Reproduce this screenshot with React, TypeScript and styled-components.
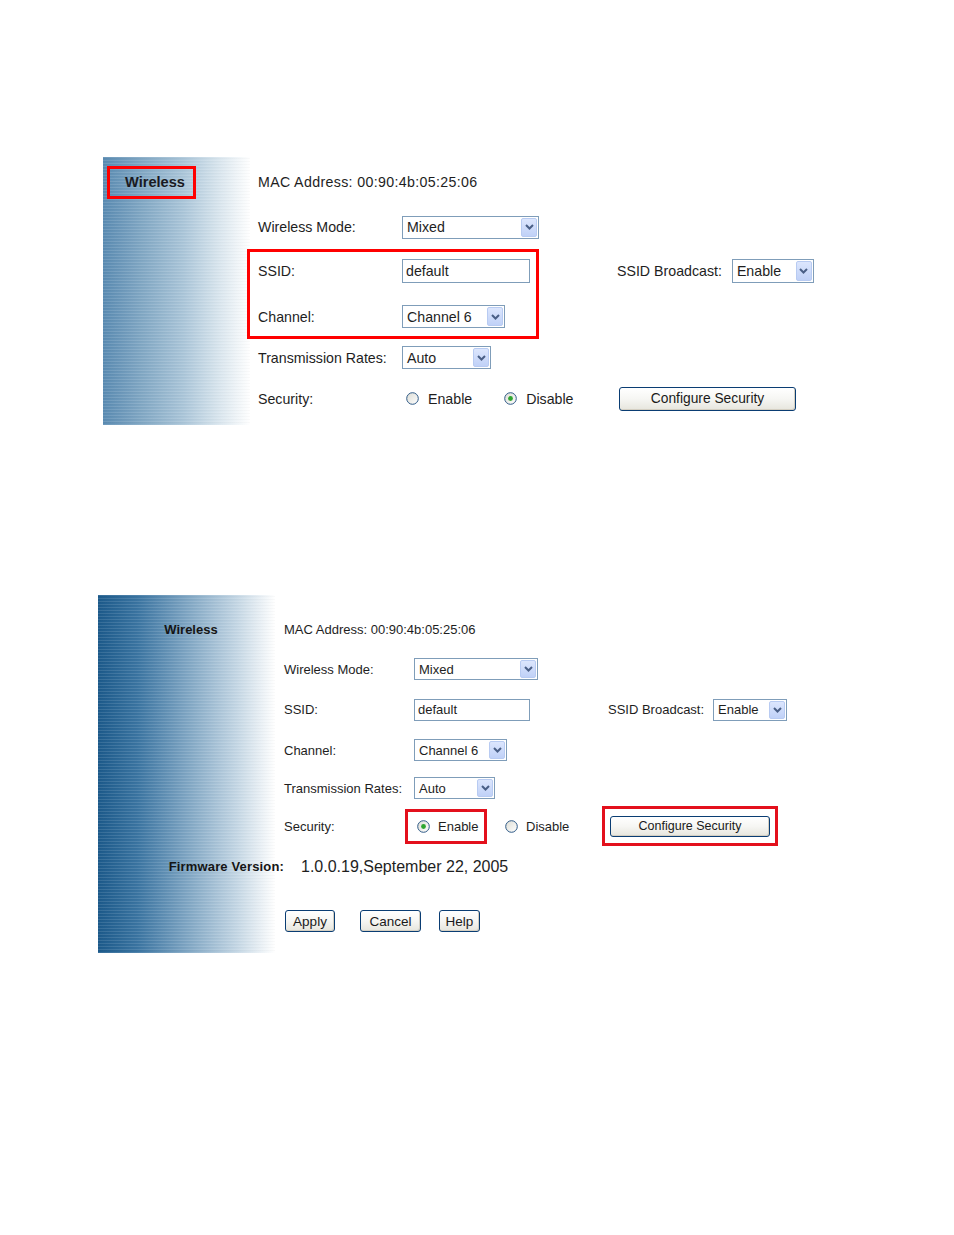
import React from "react";
import styled, { createGlobalStyle } from "styled-components";

const Global = createGlobalStyle`
  html, body { margin: 0; padding: 0; background: #fff; }
  body { font-family: "Liberation Sans", Arial, sans-serif; color: #1e1e1e; }
`;

const Page = styled.div`
  width: 954px;
  min-height: 1235px;
  padding-top: 157px;
  box-sizing: border-box;
`;

const Panel = styled.section<{ $left: number; $top: number; $grad: string; $gw: number; $pt: number; $pb: number }>`
  margin-left: ${(p) => p.$left}px;
  margin-top: ${(p) => p.$top}px;
  width: 740px;
  padding-top: ${(p) => p.$pt}px;
  padding-bottom: ${(p) => p.$pb}px;
  font-size: ${(p) => (p.$grad === "light" ? 14.2 : 13)}px;
  background-image:
    repeating-linear-gradient(to bottom, rgba(255, 255, 255, 0.11) 0 1px, rgba(0, 0, 0, 0.02) 1px 2px, transparent 2px 3px),
    ${(p) =>
      p.$grad === "light"
        ? "linear-gradient(to right, #5a8bb2 0%, #7fa6c3 25%, #abc6d9 55%, #dbe7ef 80%, #ffffff 100%)"
        : "linear-gradient(to right, #1c5a8b 0%, #3a74a1 22%, #7ea5c3 50%, #c3d6e4 78%, #ffffff 100%)"};
  background-size: ${(p) => p.$gw}px 100%, ${(p) => p.$gw}px 100%;
  background-repeat: no-repeat;
`;

const Row = styled.div<{ $cols: string; $h: number }>`
  display: grid;
  grid-template-columns: ${(p) => p.$cols};
  height: ${(p) => p.$h}px;
  align-items: center;
`;

const Group = styled.div`
  position: relative;
`;

const Highlight = styled.div<{ $l: number; $t: number; $w: number; $h: number }>`
  position: absolute;
  left: ${(p) => p.$l}px;
  top: ${(p) => p.$t}px;
  width: ${(p) => p.$w}px;
  height: ${(p) => p.$h}px;
  border: 3px solid #ff0000;
  box-sizing: border-box;
  pointer-events: none;
`;

const SideCell = styled.div<{ $align?: string }>`
  font-weight: bold;
  text-align: ${(p) => p.$align || "left"};
  color: #151515;
`;

const BoxedTitle = styled.div`
  margin-left: 4px;
  width: 89px;
  height: 33px;
  box-sizing: border-box;
  border: 3px solid #ff0000;
  display: flex;
  align-items: center;
  padding-left: 15px;
  font-size: 14.6px;
  font-weight: bold;
  color: #1a1a22;
`;

const Span = styled.div<{ $from: number; $to: number; $pl?: number; $fs?: number }>`
  grid-column: ${(p) => p.$from} / ${(p) => p.$to};
  padding-left: ${(p) => p.$pl || 0}px;
  ${(p) => (p.$fs ? `font-size: ${p.$fs}px;` : "")}
  display: flex;
  align-items: center;
`;

const Label = styled.div`
  white-space: nowrap;
`;

const Mac = styled.div<{ $ls: number }>`
  letter-spacing: ${(p) => p.$ls}px;
  white-space: nowrap;
`;

const SelectBox = styled.div<{ $w: number; $h: number }>`
  width: ${(p) => p.$w}px;
  height: ${(p) => p.$h}px;
  box-sizing: border-box;
  border: 1px solid #7f9db9;
  background: #fff;
  display: flex;
  align-items: stretch;
`;

const SelectValue = styled.div`
  flex: 1;
  display: flex;
  align-items: center;
  padding-left: 4px;
  white-space: nowrap;
  overflow: hidden;
`;

const ArrowBox = styled.div`
  width: 16px;
  margin: 1px;
  box-sizing: border-box;
  border: 1px solid #b8cbf2;
  border-radius: 2px;
  background: linear-gradient(to bottom, #dce6fd, #c0d1f7);
  display: flex;
  align-items: center;
  justify-content: center;
`;

const TextInput = styled.div<{ $w: number; $h: number }>`
  width: ${(p) => p.$w}px;
  height: ${(p) => p.$h}px;
  box-sizing: border-box;
  border: 1px solid #7f9db9;
  background: #fff;
  display: flex;
  align-items: center;
  padding-left: 3px;
`;

const RadioGroup = styled.div<{ $pl: number }>`
  display: flex;
  align-items: center;
  padding-left: ${(p) => p.$pl}px;
`;

const RadioItem = styled.div<{ $gap: number; $mr: number; $ml?: number }>`
  display: flex;
  align-items: center;
  gap: ${(p) => p.$gap}px;
  margin-right: ${(p) => p.$mr}px;
  margin-left: ${(p) => p.$ml || 0}px;
  white-space: nowrap;
`;

const RedFrame = styled.div<{ $w: number; $h: number; $ml: number; $pl: number }>`
  width: ${(p) => p.$w}px;
  height: ${(p) => p.$h}px;
  margin-left: ${(p) => p.$ml}px;
  box-sizing: border-box;
  border: 3px solid #e3101c;
  display: flex;
  align-items: center;
  padding-left: ${(p) => p.$pl}px;
`;

const XPButton = styled.button<{ $w: number; $h: number; $fs: number }>`
  width: ${(p) => p.$w}px;
  height: ${(p) => p.$h}px;
  box-sizing: border-box;
  padding: 0;
  font-family: "Liberation Sans", Arial, sans-serif;
  font-size: ${(p) => p.$fs}px;
  color: #1a1a1a;
  border: 1px solid #0a3d73;
  border-radius: 3px;
  background: linear-gradient(to bottom, #ffffff 0%, #f6f6f3 50%, #e6e5dd 100%);
  box-shadow: inset -1px -1px 0 #d4cfc2;
  display: flex;
  align-items: center;
  justify-content: center;
`;

const ButtonBar = styled.div`
  display: flex;
  align-items: center;
  padding-left: 1px;
`;

const ButtonSlot = styled.div<{ $mr: number }>`
  margin-right: ${(p) => p.$mr}px;
`;

const FirmwareLabel = styled.div`
  font-weight: bold;
  text-align: right;
  letter-spacing: 0.15px;
  color: #151515;
  white-space: nowrap;
`;

const Spacer = styled.span<{ $w: number }>`
  width: ${(p) => p.$w}px;
  flex: none;
`;

const Chevron = () => (
  <svg width="9" height="6" viewBox="0 0 9 6">
    <path d="M1 1 L4.5 4.5 L8 1" fill="none" stroke="#4a5f86" strokeWidth="2" />
  </svg>
);

const Select = ({ w, h, value }: { w: number; h: number; value: string }) => (
  <SelectBox $w={w} $h={h}>
    <SelectValue>{value}</SelectValue>
    <ArrowBox>
      <Chevron />
    </ArrowBox>
  </SelectBox>
);

const Radio = ({ checked }: { checked?: boolean }) => (
  <svg width="13" height="13" viewBox="0 0 13 13">
    <defs>
      <linearGradient id="rg" x1="0" y1="0" x2="1" y2="1">
        <stop offset="0" stopColor="#dcdcd4" />
        <stop offset="1" stopColor="#ffffff" />
      </linearGradient>
    </defs>
    <circle cx="6.5" cy="6.5" r="5.8" fill="url(#rg)" stroke="#2f5a87" strokeWidth="1" />
    {checked && <circle cx="6.5" cy="6.5" r="2.4" fill="#2fa62f" />}
  </svg>
);

const TOP = "155px 144px 215px auto";
const BOT = "186px 130px 194px auto";

export default function App() {
  return (
    <Page>
      <Global />
      <Panel $left={103} $top={0} $grad="light" $gw={147} $pt={0} $pb={5}>
        <Row $cols={TOP} $h={50}>
          <SideCell>
            <BoxedTitle>Wireless</BoxedTitle>
          </SideCell>
          <Span $from={2} $to={5}>
            <Mac $ls={0.35}>MAC Address: 00:90:4b:05:25:06</Mac>
          </Span>
        </Row>
        <Row $cols={TOP} $h={40}>
          <div />
          <Label>Wireless Mode:</Label>
          <Select w={137} h={23} value="Mixed" />
        </Row>
        <Group>
          <Row $cols={TOP} $h={48}>
            <div />
            <Label>SSID:</Label>
            <TextInput $w={128} $h={24}>default</TextInput>
            <Span $from={4} $to={5}>
              <Label>SSID Broadcast:</Label>
              <Spacer $w={10} />
              <Select w={82} h={24} value="Enable" />
            </Span>
          </Row>
          <Row $cols={TOP} $h={43}>
            <div />
            <Label>Channel:</Label>
            <Select w={103} h={23} value="Channel 6" />
          </Row>
          <Highlight $l={144} $t={2} $w={292} $h={90} />
        </Group>
        <Row $cols={TOP} $h={39}>
          <div />
          <Label>Transmission Rates:</Label>
          <Select w={89} h={23} value="Auto" />
        </Row>
        <Row $cols={TOP} $h={43}>
          <div />
          <Label>Security:</Label>
          <RadioGroup $pl={4}>
            <RadioItem $gap={9} $mr={32}>
              <Radio />
              Enable
            </RadioItem>
            <RadioItem $gap={9} $mr={0}>
              <Radio checked />
              Disable
            </RadioItem>
          </RadioGroup>
          <Span $from={4} $to={5} $pl={2}>
            <XPButton $w={177} $h={24} $fs={13.8}>
              Configure Security
            </XPButton>
          </Span>
        </Row>
      </Panel>

      <Panel $left={98} $top={170} $grad="dark" $gw={177} $pt={14} $pb={0}>
        <Row $cols={BOT} $h={40}>
          <SideCell $align="center">Wireless</SideCell>
          <Span $from={2} $to={5}>
            <Mac $ls={0}>MAC Address: 00:90:4b:05:25:06</Mac>
          </Span>
        </Row>
        <Row $cols={BOT} $h={40}>
          <div />
          <Label>Wireless Mode:</Label>
          <Select w={124} h={22} value="Mixed" />
        </Row>
        <Row $cols={BOT} $h={41}>
          <div />
          <Label>SSID:</Label>
          <TextInput $w={116} $h={22}>default</TextInput>
          <Span $from={4} $to={5}>
            <Label>SSID Broadcast:</Label>
            <Spacer $w={9} />
            <Select w={74} h={22} value="Enable" />
          </Span>
        </Row>
        <Row $cols={BOT} $h={40}>
          <div />
          <Label>Channel:</Label>
          <Select w={93} h={22} value="Channel 6" />
        </Row>
        <Row $cols={BOT} $h={36}>
          <div />
          <Label>Transmission Rates:</Label>
          <Select w={81} h={22} value="Auto" />
        </Row>
        <Row $cols={BOT} $h={38}>
          <div />
          <Label>Security:</Label>
          <RadioGroup $pl={0}>
            <RedFrame $w={82} $h={35} $ml={-9} $pl={9}>
              <RadioItem $gap={8} $mr={0}>
                <Radio checked />
                Enable
              </RadioItem>
            </RedFrame>
            <RadioItem $gap={8} $mr={0} $ml={18}>
              <Radio />
              Disable
            </RadioItem>
          </RadioGroup>
          <Span $from={4} $to={5}>
            <RedFrame $w={176} $h={40} $ml={-6} $pl={5}>
              <XPButton $w={160} $h={21} $fs={12.5}>
                Configure Security
              </XPButton>
            </RedFrame>
          </Span>
        </Row>
        <Row $cols={BOT} $h={45}>
          <FirmwareLabel>Firmware Version:</FirmwareLabel>
          <Span $from={2} $to={5} $pl={17} $fs={16}>
            1.0.0.19,September 22, 2005
          </Span>
        </Row>
        <Row $cols={BOT} $h={64}>
          <div />
          <Span $from={2} $to={5}>
            <ButtonBar>
              <ButtonSlot $mr={25}>
                <XPButton $w={50} $h={22} $fs={13.5}>Apply</XPButton>
              </ButtonSlot>
              <ButtonSlot $mr={18}>
                <XPButton $w={61} $h={22} $fs={13.5}>Cancel</XPButton>
              </ButtonSlot>
              <ButtonSlot $mr={0}>
                <XPButton $w={41} $h={22} $fs={13.5}>Help</XPButton>
              </ButtonSlot>
            </ButtonBar>
          </Span>
        </Row>
      </Panel>
    </Page>
  );
}
